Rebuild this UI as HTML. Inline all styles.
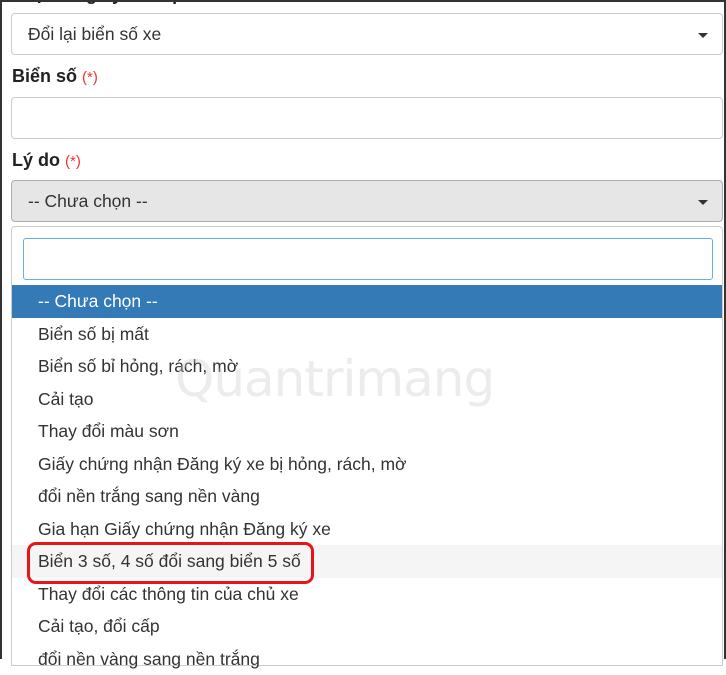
<!DOCTYPE html>
<html><head><meta charset="utf-8"><style>
*{box-sizing:border-box;margin:0;padding:0}
body{width:726px;height:659px;overflow:hidden;background:#fff;font-family:"Liberation Sans",Arial,sans-serif;color:#333;position:relative}
.frame{position:absolute;inset:0;border:2px solid #333;border-bottom:none;pointer-events:none;z-index:10}
.box{position:absolute;left:11px;width:712px;border:1px solid #ccc;border-radius:4px;background:#fff}
.sel{height:42px;font-size:17.5px;padding:10px 16px;line-height:20px}
.arr{position:absolute;right:14px;top:19px;width:0;height:0;border-left:5px solid transparent;border-right:5px solid transparent;border-top:5px solid #333}
.lbl{position:absolute;left:12px;font-size:18px;font-weight:bold;color:#222}
.lbl span{color:#e33;font-weight:normal;font-size:15px}
.drop{position:absolute;left:11px;top:226px;width:712px;height:440px;border:1px solid #ccc;border-radius:4px 4px 0 0;background:#fff}
.search{position:absolute;left:11px;top:11px;width:690px;height:42px;border:1px solid #66afe9;border-radius:3px}
.it{position:absolute;left:0;width:710px;height:32.5px;line-height:32px;padding-left:26px;font-size:17.5px;color:#333}
</style></head><body>
<div class="frame"></div>
<div class="lbl" style="top:-16px">Loại đăng ký xe cấp</div>
<div class="box sel" style="top:13px">Đổi lại biển số xe<div class="arr"></div></div>
<div class="lbl" style="top:66px">Biển số <span>(*)</span></div>
<div class="box" style="top:97px;height:42px"></div>
<div class="lbl" style="top:150px">Lý do <span>(*)</span></div>
<div class="box sel" style="top:180px;background:#e6e6e6;border-color:#adadad">-- Chưa chọn --<div class="arr"></div></div>
<div class="drop">
<div class="search"></div>
<div class="it" style="top:58px;background:#337ab7;color:#fff">-- Chưa chọn --</div>
<div class="it" style="top:90.5px">Biển số bị mất</div>
<div class="it" style="top:123px">Biển số bỉ hỏng, rách, mờ</div>
<div class="it" style="top:155.5px">Cải tạo</div>
<div class="it" style="top:188px">Thay đổi màu sơn</div>
<div class="it" style="top:220.5px">Giấy chứng nhận Đăng ký xe bị hỏng, rách, mờ</div>
<div class="it" style="top:253px">đổi nền trắng sang nền vàng</div>
<div class="it" style="top:285.5px">Gia hạn Giấy chứng nhận Đăng ký xe</div>
<div class="it" style="top:318px;background:#f5f5f5">Biển 3 số, 4 số đổi sang biển 5 số</div>
<div class="it" style="top:350.5px">Thay đổi các thông tin của chủ xe</div>
<div class="it" style="top:383px">Cải tạo, đổi cấp</div>
<div class="it" style="top:415.5px">đổi nền vàng sang nền trắng</div>
</div>
<div style="position:absolute;left:27px;top:542px;width:287px;height:42px;border:3px solid #e8141c;border-radius:9px"></div>
<div style="position:absolute;left:175px;top:350px;font-size:50px;color:rgba(200,200,200,0.35);font-family:'DejaVu Sans',sans-serif;letter-spacing:-1px">Quantrimang</div>
</body></html>
